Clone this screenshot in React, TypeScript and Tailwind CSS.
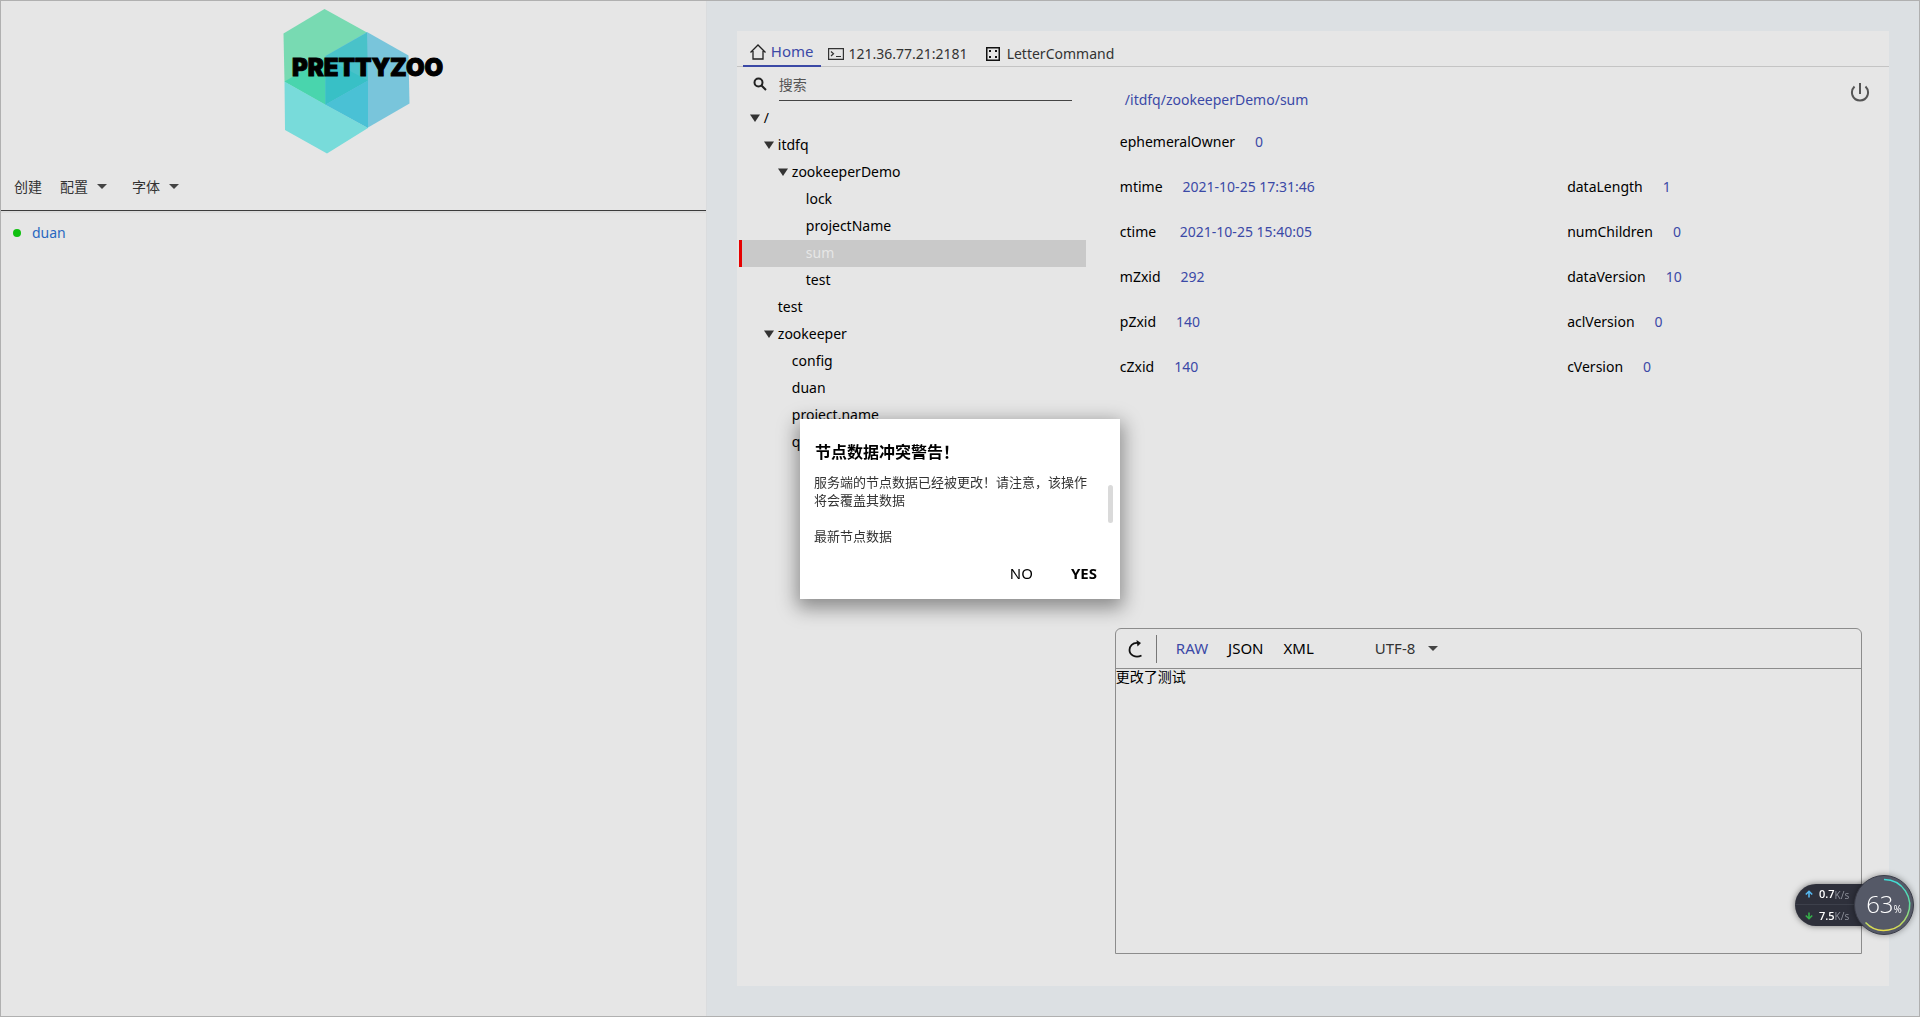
import { useState } from "react";
import clsx from "clsx";

interface TreeNode {
  id: string;
  name: string;
  level: number;
  expandable?: boolean;
}

const nodes: TreeNode[] = [
  { id: "/", name: "/", level: 0, expandable: true },
  { id: "/itdfq", name: "itdfq", level: 1, expandable: true },
  { id: "/itdfq/zookeeperDemo", name: "zookeeperDemo", level: 2, expandable: true },
  { id: "/itdfq/zookeeperDemo/lock", name: "lock", level: 3 },
  { id: "/itdfq/zookeeperDemo/projectName", name: "projectName", level: 3 },
  { id: "/itdfq/zookeeperDemo/sum", name: "sum", level: 3 },
  { id: "/itdfq/zookeeperDemo/test", name: "test", level: 3 },
  { id: "/test", name: "test", level: 1 },
  { id: "/zookeeper", name: "zookeeper", level: 1, expandable: true },
  { id: "/zookeeper/config", name: "config", level: 2 },
  { id: "/zookeeper/duan", name: "duan", level: 2 },
  { id: "/zookeeper/project.name", name: "project.name", level: 2 },
  { id: "/zookeeper/quota", name: "quota", level: 2 },
];

const indents = ["pl-2", "pl-[22px]", "pl-9", "pl-[50px]"];

const leftStats = [
  ["mtime", "2021-10-25 17:31:46"],
  ["ctime", "2021-10-25 15:40:05"],
  ["mZxid", "292"],
  ["pZxid", "140"],
  ["cZxid", "140"],
];

const rightStats = [
  ["dataLength", "1"],
  ["numChildren", "0"],
  ["dataVersion", "10"],
  ["aclVersion", "0"],
  ["cVersion", "0"],
];

const conflictTitle = "节点数据冲突警告\uff01";
const conflictMessage = "服务端的节点数据已经被更改\uff01请注意\uff0c该操作将会覆盖其数据";

function Caret({ className }: { className?: string }) {
  return (
    <svg viewBox="0 0 10 5" className={clsx("h-[5px] w-2.5 fill-[#444]", className)} aria-hidden="true">
      <path d="M0 0h10L5 5z" />
    </svg>
  );
}

function Logo() {
  return (
    <svg viewBox="0 1 165 155" className="h-[155px] w-[165px] overflow-visible" role="img" aria-label="PrettyZoo">
      <path d="M6.5 33.5 47.500 9 90 32.500 91 80.500 48.500 105 7.500 81.500z" fill="#78dab2" />
      <path d="M90 32 131.500 55.500 132.500 103.500 91 127.500 48.500 105 48.500 56z" fill="#79c5db" />
      <path d="M7.500 81.500 48.500 104.500 91 128 50 153.500 8 130z" fill="#78dbda" />
      <path d="M7.500 81.500 48.500 58V104.500z" fill="#49d5ad" />
      <path d="M90 32.500 48.500 56V104.500L91 80.500z" fill="#49c2c9" />
      <path d="M48.500 58 91 80.500 48.500 104.500z" fill="#38c0c6" />
      <path d="M91 80.500V128L48.500 104.500z" fill="#4ac1d5" />
      <text
        x="15"
        y="76"
        fontSize="24"
        className="fill-black stroke-black stroke-1 font-['Inter'] font-black"
      >
        PRETTYZOO
      </text>
    </svg>
  );
}

function Sidebar() {
  return (
    <aside className="flex w-[36.8%] flex-none flex-col border-r border-[#dadcde] bg-[#e6e6e6]">
      <div className="flex justify-center pb-[7px] pl-3">
        <Logo />
      </div>
      <nav className="flex h-12 items-center border-b border-[#3c3c3c] pl-[13px] text-[#333]">
        <button type="button">创建</button>
        <button type="button" aria-haspopup="menu" className="ml-[18px] flex items-center gap-[9px]">
          配置
          <Caret />
        </button>
        <button type="button" aria-haspopup="menu" className="ml-[25px] flex items-center gap-[9px]">
          字体
          <Caret />
        </button>
      </nav>
      <ul className="border-t-2 border-[#dcdcdc]">
        <li>
          <button type="button" className="flex h-10 w-full items-center gap-[11px] pl-3 text-[#2a68c0]">
            <span className="size-2 rounded-full bg-[#10c010]" />
            duan
          </button>
        </li>
      </ul>
    </aside>
  );
}

function TabBar() {
  return (
    <div role="tablist" className="flex h-9 flex-none items-stretch border-b border-[#c4c4c4] pl-1.5 text-[#333]">
      <button
        type="button"
        role="tab"
        aria-selected="true"
        className="-mb-px flex items-center gap-[5px] border-b-2 border-[#3b49a6] px-[7px] pt-[7px] text-[#3b49a6]"
      >
        <svg viewBox="0 0 16 16" className="size-4 fill-none stroke-[#222]" strokeWidth="1.300" aria-hidden="true">
          <path d="M.5 8.500 8 1l7.500 7.500M3 7v8h10V7" />
        </svg>
        <span className="text-[15px]">Home</span>
      </button>
      <button type="button" role="tab" aria-selected="false" className="flex items-center gap-[5px] pt-2.5 pl-[7px]">
        <svg viewBox="0 0 16 12" className="h-3 w-4 fill-none stroke-[#333]" strokeWidth="1.200" aria-hidden="true">
          <path d="M.6.6h14.800v10.800H.6zM3 3.500l2.500 2.300L3 8M8 8.500h5" />
        </svg>
        121.36.77.21:2181
      </button>
      <button type="button" role="tab" aria-selected="false" className="flex items-center gap-[7px] pt-2.5 pl-[18px]">
        <svg viewBox="0 0 14 14" className="size-3.5" aria-hidden="true">
          <path d="M.75.75h12.500v12.500H.75z" fill="none" stroke="#111" strokeWidth="1.500" />
          <path d="M3 3h2v2H3zM9 3h2v2H9zM3 9h2v2H3zM9 9h2v2H9z" fill="#111" />
        </svg>
        LetterCommand
      </button>
    </div>
  );
}

function NodeTree({ selected, onSelect }: { selected: string; onSelect: (id: string) => void }) {
  return (
    <div className="w-[349px] flex-none pl-0.5">
      <label className="flex h-[34px] items-start pl-3.5">
        <svg viewBox="0 0 14 14" className="mt-2.5 size-3.5 fill-none stroke-[#222]" strokeWidth="2" aria-label="搜索">
          <circle cx="5.500" cy="5.500" r="4" />
          <path d="m8.500 8.500 4.500 4.500" />
        </svg>
        <input
          type="text"
          placeholder="搜索"
          className="mr-3.5 ml-3 h-full min-w-0 flex-1 border-b border-[#444] bg-transparent pt-0.5 outline-none placeholder:text-[#555]"
        />
      </label>
      <ul role="tree" className="mt-1">
        {nodes.map((node) => (
          <li key={node.id} role="treeitem" aria-selected={node.id === selected}>
            <button
              type="button"
              onClick={() => onSelect(node.id)}
              className={clsx(
                "flex h-[27px] w-full items-center border-l-3 pb-0.5",
                indents[node.level],
                node.id === selected
                  ? "border-[#e60000] bg-[#c9c9c9] text-[#e6e6e6]"
                  : "border-transparent text-black",
              )}
            >
              <span className="w-3.5 flex-none">
                {node.expandable && (
                  <svg viewBox="0 0 10 8" className="h-2 w-2.5 fill-[#333]" aria-hidden="true">
                    <path d="M0 .5h10L5 8z" />
                  </svg>
                )}
              </span>
              {node.name}
            </button>
          </li>
        ))}
      </ul>
    </div>
  );
}

function StatList({ stats, className }: { stats: string[][]; className?: string }) {
  return (
    <dl className={className}>
      {stats.map(([label, value]) => (
        <div key={label} className="flex h-[45px] items-center">
          <dt className={clsx("mr-5", label.endsWith("time") && "min-w-10")}>{label}</dt>
          <dd className="text-[#3b49a6]">{value}</dd>
        </div>
      ))}
    </dl>
  );
}

function NodeDetails({ path }: { path: string }) {
  return (
    <section className="pl-[5px]">
      <div className="flex h-[52px] items-start justify-between pt-[15px] pl-[5px]">
        <p className="pt-2 leading-5 text-[#3b49a6]">{path}</p>
        <button type="button" aria-label="断开连接" className="-mr-2">
          <svg viewBox="0 0 20 20" className="size-5 fill-none stroke-[#555]" strokeWidth="2" aria-hidden="true">
            <path d="M10 1v11M4.500 4.500C2 7 1.500 10.500 2.500 13.500 4 17 7 18.500 10 18.500s6-1.500 7.500-5C18.500 10.500 18 7 15.500 4.500" />
          </svg>
        </button>
      </div>
      <StatList stats={[["ephemeralOwner", "0"]]} />
      <div className="grid grid-cols-[3fr_2fr]">
        <StatList stats={leftStats} />
        <StatList stats={rightStats} className="pl-0.5" />
      </div>
    </section>
  );
}

function DataEditor() {
  const [format, setFormat] = useState("RAW");

  return (
    <section className="flex flex-col rounded-t-md border border-[#8c8c8c]">
      <div className="flex h-10 flex-none items-center border-b border-[#8c8c8c] text-[15px]">
        <button type="button" aria-label="刷新" className="ml-3">
          <svg viewBox="0 0 16 18" className="h-[18px] w-4" aria-hidden="true">
            <path d="M10 3C4.500 2.500 1.500 6 1.500 10c0 5 6 8.500 12 5.500" fill="none" stroke="#111" strokeWidth="1.800" />
            <path d="M8.500 0 13 3 9.500 6.500z" fill="#111" />
          </svg>
        </button>
        <span className="ml-3 h-7 w-px bg-[#777]" />
        <div className="ml-[19px] flex gap-5">
          {["RAW", "JSON", "XML"].map((item) => (
            <button
              key={item}
              type="button"
              onClick={() => setFormat(item)}
              className={item === format ? "text-[#3b49a6]" : "text-black"}
            >
              {item}
            </button>
          ))}
        </div>
        <div className="ml-[61px] flex items-center">
          <select aria-label="编码" className="appearance-none bg-transparent pr-6 text-[#333] outline-none">
            <option>UTF-8</option>
          </select>
          <Caret className="pointer-events-none -ml-3" />
        </div>
      </div>
      <textarea
        aria-label="节点数据"
        defaultValue="更改了测试"
        className="w-full flex-1 resize-none bg-transparent leading-4 text-black outline-none"
      />
    </section>
  );
}

function ConflictDialog() {
  return (
    <div className="fixed inset-0 flex items-center justify-center">
      <div
        role="dialog"
        aria-labelledby="conflict-title"
        className="flex h-[180px] w-80 flex-col bg-white pt-[21px] shadow-[0_6px_18px_3px_rgba(0,0,0,0.4)]"
      >
        <h2 id="conflict-title" className="px-[15px] text-base leading-6 font-bold text-black">
          {conflictTitle}
        </h2>
        <div className="mt-[9px] flex flex-1 items-start justify-between pr-[7px] pl-3.5">
          <div className="w-[280px] text-[13px] leading-[18px] text-[#333]">
            <p>{conflictMessage}</p>
            <p className="mt-[18px]">最新节点数据</p>
          </div>
          <span className="mt-3 h-[38px] w-[5px] rounded-full bg-[#dadada]" />
        </div>
        <div className="flex justify-end gap-[38px] pr-[23px] pb-3.5 text-[15px] text-black">
          <button type="button">NO</button>
          <button type="button" className="font-bold">
            YES
          </button>
        </div>
      </div>
    </div>
  );
}

function SpeedRow({ speed, up }: { speed: string; up?: boolean }) {
  return (
    <div className="flex h-[21px] items-center pl-2.5">
      <svg
        viewBox="0 0 8 8"
        className={clsx("mr-1.5 size-2 fill-none", up ? "stroke-[#56b8f0]" : "rotate-180 stroke-[#35b04a]")}
        strokeWidth="1.600"
        aria-hidden="true"
      >
        <path d="M4 7.500V1.500M.8 4.500 4 1.300l3.200 3.200" />
      </svg>
      <span className="text-[11px] font-semibold text-white">{speed}</span>
      <span className="pt-0.5 text-[10px] text-[#8f929c]">K/s</span>
    </div>
  );
}

function NetMonitor() {
  return (
    <div className="fixed right-1.5 bottom-[82px] flex items-center font-['Open_Sans']">
      <div className="-mr-7 h-[42px] w-[87px] divide-y divide-[#3d404b] rounded-l-full bg-[#2e303b] shadow-[0_0_6px_rgba(0,0,0,0.5)]">
        <SpeedRow speed="0.7" up />
        <SpeedRow speed="7.5" />
      </div>
      <div className="relative flex size-[60px] items-center justify-center rounded-full border border-[#3a3c48] bg-[#555967] text-white shadow-[0_0_6px_rgba(0,0,0,0.4)]">
        <svg viewBox="0 0 60 60" className="absolute -inset-px size-[60px]" fill="none" strokeWidth="1.500" aria-hidden="true">
          <defs>
            <linearGradient id="ring" x1="0" y1="0" x2="0" y2="1">
              <stop offset="0" stopColor="#3fdcd8" />
              <stop offset=".5" stopColor="#5fdc9c" />
              <stop offset="1" stopColor="#e6dc4c" />
            </linearGradient>
          </defs>
          <path d="M30 4.500A25.500 25.500 0 1 1 11.500 47.500" stroke="url(#ring)" />
        </svg>
        <span className="pb-0.5 text-[24px] font-light">63</span>
        <span className="mt-2 text-[10px]">%</span>
      </div>
    </div>
  );
}

export default function App() {
  const [selected, setSelected] = useState("/itdfq/zookeeperDemo/sum");

  return (
    <div className="flex min-h-screen border border-[#b0b0b0] bg-[#dce0e3] font-['Noto_Sans','Noto_Sans_CJK_SC',sans-serif] text-sm">
      <Sidebar />
      <main className="flex min-w-0 flex-1 flex-col p-[30px]">
        <div className="flex flex-1 flex-col bg-[#e6e6e6]">
          <TabBar />
          <div className="flex flex-1">
            <NodeTree selected={selected} onSelect={setSelected} />
            <div className="mr-[27px] mb-8 ml-[29px] grid min-w-0 flex-1 grid-rows-[31fr_18fr]">
              <NodeDetails path={selected} />
              <DataEditor />
            </div>
          </div>
        </div>
      </main>
      <ConflictDialog />
      <NetMonitor />
    </div>
  );
}
